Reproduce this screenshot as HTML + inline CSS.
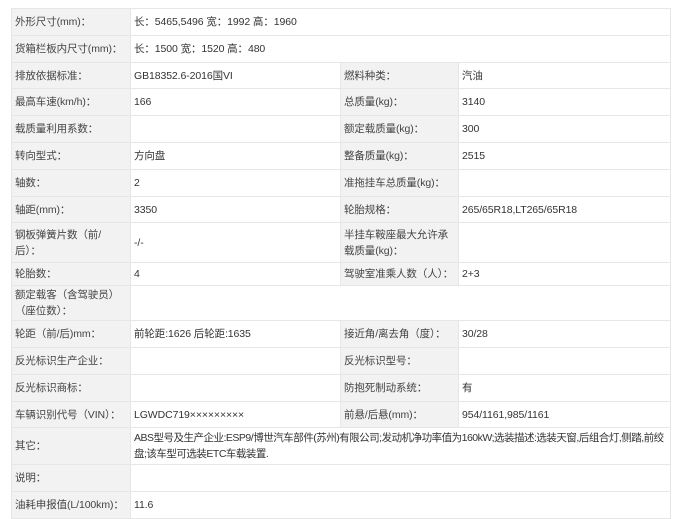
<!DOCTYPE html>
<html><head><meta charset="utf-8"><style>
body{margin:0;background:#fff;width:680px;height:510px;overflow:hidden;font-family:"Liberation Sans","Noto Sans CJK SC",sans-serif;font-size:10.5px;color:#333}
table{position:absolute;left:11px;top:8px;border-collapse:collapse;width:659px;table-layout:fixed}
td{border:1px solid #e6e6e6;padding:0 3px;vertical-align:middle;line-height:16px;white-space:nowrap;overflow:hidden;letter-spacing:-0.1px}
td.l{background:#f2f2f2;color:#444}
td.w{white-space:normal}
</style></head><body>
<table>
<colgroup><col style="width:119px"><col style="width:210px"><col style="width:118px"><col style="width:212px"></colgroup>
<tr style="height:27px"><td class="l">外形尺寸(mm)：</td><td colspan="3">长：5465,5496 宽：1992 高：1960</td></tr>
<tr style="height:27px"><td class="l">货箱栏板内尺寸(mm)：</td><td colspan="3">长：1500 宽：1520 高：480</td></tr>
<tr style="height:26px"><td class="l">排放依据标准：</td><td>GB18352.6-2016国VI</td><td class="l">燃料种类：</td><td>汽油</td></tr>
<tr style="height:27px"><td class="l">最高车速(km/h)：</td><td>166</td><td class="l">总质量(kg)：</td><td>3140</td></tr>
<tr style="height:27px"><td class="l">载质量利用系数：</td><td></td><td class="l">额定载质量(kg)：</td><td>300</td></tr>
<tr style="height:27px"><td class="l">转向型式：</td><td>方向盘</td><td class="l">整备质量(kg)：</td><td>2515</td></tr>
<tr style="height:27px"><td class="l">轴数：</td><td>2</td><td class="l">准拖挂车总质量(kg)：</td><td></td></tr>
<tr style="height:26px"><td class="l">轴距(mm)：</td><td>3350</td><td class="l">轮胎规格：</td><td>265/65R18,LT265/65R18</td></tr>
<tr style="height:40px"><td class="l">钢板弹簧片数（前/<br>后）：</td><td>-/-</td><td class="l w">半挂车鞍座最大允许承载质量(kg)：</td><td></td></tr>
<tr style="height:23px"><td class="l">轮胎数：</td><td>4</td><td class="l">驾驶室准乘人数（人）：</td><td>2+3</td></tr>
<tr style="height:35px"><td class="l w">额定载客（含驾驶员）（座位数）：</td><td colspan="3"></td></tr>
<tr style="height:27px"><td class="l">轮距（前/后)mm：</td><td>前轮距:1626 后轮距:1635</td><td class="l">接近角/离去角（度）：</td><td>30/28</td></tr>
<tr style="height:27px"><td class="l">反光标识生产企业：</td><td></td><td class="l">反光标识型号：</td><td></td></tr>
<tr style="height:27px"><td class="l">反光标识商标：</td><td></td><td class="l">防抱死制动系统：</td><td>有</td></tr>
<tr style="height:26px"><td class="l">车辆识别代号（VIN）：</td><td>LGWDC719×××××××××</td><td class="l">前悬/后悬(mm)：</td><td>954/1161,985/1161</td></tr>
<tr style="height:37px"><td class="l">其它：</td><td colspan="3" class="w" style="letter-spacing:-0.5px">ABS型号及生产企业:ESP9/博世汽车部件(苏州)有限公司;发动机净功率值为160kW;选装描述:选装天窗,后组合灯,侧踏,前绞盘;该车型可选装ETC车载装置.</td></tr>
<tr style="height:27px"><td class="l">说明：</td><td colspan="3"></td></tr>
<tr style="height:27px"><td class="l">油耗申报值(L/100km)：</td><td colspan="3">11.6</td></tr>
</table>
</body></html>
